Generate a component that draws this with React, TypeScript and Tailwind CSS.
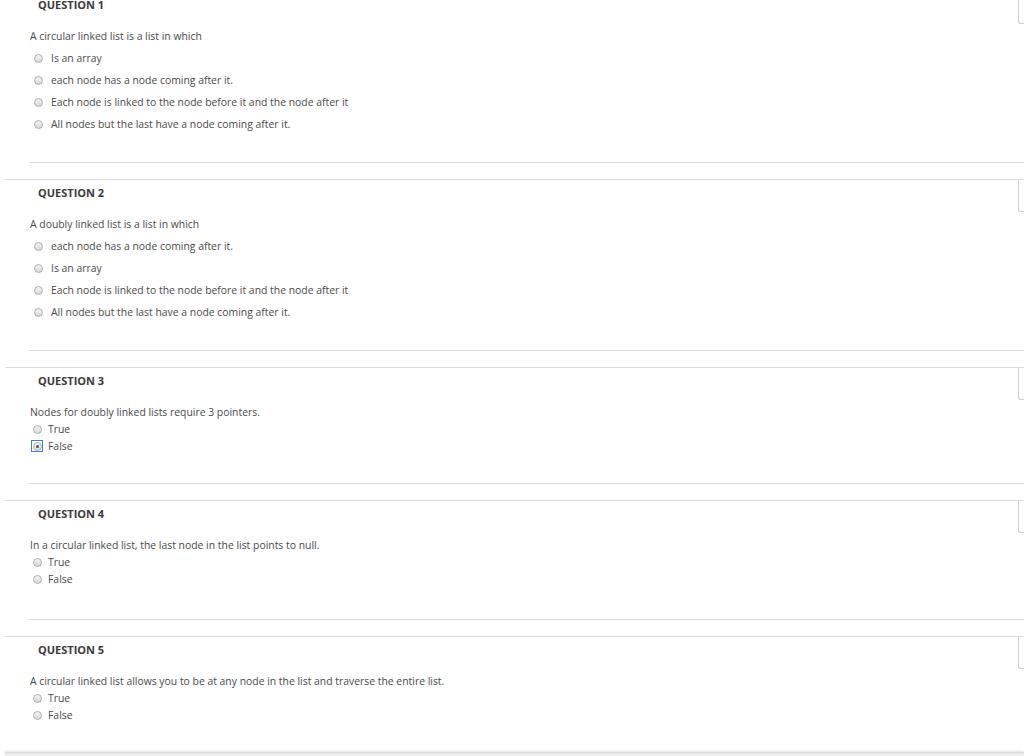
type Question = {
  title: string;
  text: string;
  options: string[];
  compact?: boolean;
  selected?: number;
  tall?: boolean;
};

const questions: Question[] = [
  {
    title: "QUESTION 1",
    text: "A circular linked list is a list in which",
    options: [
      "Is an array",
      "each node has a node coming after it.",
      "Each node is linked to the node before it and the node after it",
      "All nodes but the last have a node coming after it.",
    ],
  },
  {
    title: "QUESTION 2",
    text: "A doubly linked list is a list in which",
    options: [
      "each node has a node coming after it.",
      "Is an array",
      "Each node is linked to the node before it and the node after it",
      "All nodes but the last have a node coming after it.",
    ],
  },
  {
    title: "QUESTION 3",
    text: "Nodes for doubly linked lists require 3 pointers.",
    options: ["True", "False"],
    compact: true,
    selected: 1,
  },
  {
    title: "QUESTION 4",
    text: "In a circular linked list, the last node in the list points to null.",
    options: ["True", "False"],
    compact: true,
    tall: true,
  },
  {
    title: "QUESTION 5",
    text: "A circular linked list allows you to be at any node in the list and traverse the entire list.",
    options: ["True", "False"],
    compact: true,
  },
];

function Radio({ checked }: { checked?: boolean }) {
  const dot = (
    <span className="flex h-[9px] w-[9px] items-center justify-center rounded-full border border-[#b0b0b0] bg-gradient-to-b from-[#f4f4f4] to-[#d8d8d8]">
      {checked && <span className="h-[3px] w-[3px] rounded-full bg-[#555]" />}
    </span>
  );
  if (checked) {
    return (
      <span className="-ml-[2px] -mr-[1px] flex h-[12px] w-[12px] items-center justify-center border border-[#3c7fd6]">
        {dot}
      </span>
    );
  }
  return dot;
}

function QuestionBlock({ q, last }: { q: Question; last: boolean }) {
  let lineClass = "mt-[31px] mb-[16px] -mr-[6px] border-b border-[#dcdcdc]";
  if (q.compact) lineClass = "mt-[30px] mb-[16px] -mr-[6px] border-b border-[#dcdcdc]";
  if (q.tall) lineClass = "mt-[33px] mb-[16px] -mr-[6px] border-b border-[#dcdcdc]";

  return (
    <section className="ml-[5px] flex border-t border-[#dcdcdc]">
      <div className="flex-1 pl-[24px]">
        <h3 className="pl-[9px] pt-[6px] text-[11px] font-bold leading-[14px] text-[#3a3a3a]">
          {q.title}
        </h3>
        <p className="mt-[17px] pl-[1px] text-[10.4px] leading-[14px] text-[#4a4a4a]">{q.text}</p>
        <ul>
          {q.options.map((opt, i) => (
            <li
              key={i}
              className={
                q.compact
                  ? "mt-[3px] flex items-center gap-[6px] pl-[4px] text-[10.4px] leading-[14px] text-[#4a4a4a]"
                  : "mt-[8px] flex items-center gap-[8px] pl-[5px] text-[10.4px] leading-[14px] text-[#4a4a4a]"
              }
            >
              <Radio checked={q.selected === i} />
              <span>{opt}</span>
            </li>
          ))}
        </ul>
        {!last && <div className={lineClass} />}
        {last && <div className="h-[30px]" />}
      </div>
      <div className="relative h-[32px] w-[6px] shrink-0 rounded-bl-[3px] border-b border-l border-[#cfcfcf] bg-white" />
    </section>
  );
}

export default function App() {
  return (
    <div
      className="h-[756px] w-[1024px] overflow-hidden bg-white"
      style={{ fontFamily: '"Open Sans", "Noto Sans", sans-serif' }}
    >
      <div className="-mt-[9px]">
        {questions.map((q, i) => (
          <QuestionBlock key={q.title} q={q} last={i === questions.length - 1} />
        ))}
        <div className="ml-[5px] h-[10px] border-t border-[#d8d8d8] bg-[#ececec] shadow-[0_-1px_3px_rgba(0,0,0,0.12)]" />
      </div>
    </div>
  );
}
